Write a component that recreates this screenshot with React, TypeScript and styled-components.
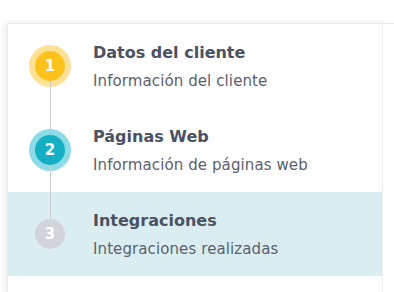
import React from 'react';
import styled, {createGlobalStyle} from 'styled-components';

const GlobalStyle = createGlobalStyle`
    html, body {
        margin: 0;
        padding: 0;
        background: #ffffff;
        font-family: "DejaVu Sans", "Noto Sans", sans-serif;
    }
`;

interface Step {
    number: number;
    title: string;
    subtitle: string;
    color: string;
    ring: string;
    active?: boolean;
}

const STEPS: Step[] = [
    {number: 1, title: 'Datos del cliente', subtitle: 'Información del cliente', color: '#fcc21b', ring: '#ffe195'},
    {number: 2, title: 'Páginas Web', subtitle: 'Información de páginas web', color: '#14afc3', ring: '#8cdbe7'},
    {number: 3, title: 'Integraciones', subtitle: 'Integraciones realizadas', color: '#d2d4db', ring: 'transparent', active: true},
];

export default function App() {
    return (
        <>
            <GlobalStyle />
            <Page>
                <Card>
                    <Sidebar>
                        {STEPS.map((step, i) => (
                            <StepRow key={step.number} $active={step.active}>
                                <Indicator>
                                    <Connector $hidden={i === 0} />
                                    <Bubble $color={step.color} $ring={step.ring}>{step.number}</Bubble>
                                    <Connector $hidden={i === STEPS.length - 1} />
                                </Indicator>
                                <StepText>
                                    <StepTitle>{step.title}</StepTitle>
                                    <StepSubtitle>{step.subtitle}</StepSubtitle>
                                </StepText>
                            </StepRow>
                        ))}
                    </Sidebar>
                    <Content />
                </Card>
            </Page>
        </>
    );
}

const Page = styled.div`
    padding: 23px 0 0 7px;
    height: 269px;
    overflow: hidden;
`

const Card = styled.div`
    display: flex;
    height: 100%;
    border-top: 1px solid #e3eaf0;
    border-left: 1px solid #e8ecf0;
    box-shadow: -4px 0 6px rgba(0, 0, 0, 0.06);
    background: #ffffff;
`

const Sidebar = styled.div`
    width: 374px;
    flex-shrink: 0;
    border-right: 1px solid #eceef1;
`

const Content = styled.div`
    flex: 1;
    background: #ffffff;
`

const StepRow = styled.div<{$active?: boolean}>`
    display: flex;
    align-items: stretch;
    height: 84px;
    padding-left: 27px;
    background: ${p => p.$active ? '#daeef1' : 'transparent'};
`

const Indicator = styled.div`
    width: 30px;
    display: flex;
    flex-direction: column;
    align-items: center;
    flex-shrink: 0;
`

const Connector = styled.div<{$hidden?: boolean}>`
    flex: 1;
    width: 1px;
    background: ${p => p.$hidden ? 'transparent' : '#c9ccd3'};
`

const Bubble = styled.div<{$color: string; $ring: string}>`
    width: 30px;
    height: 30px;
    border-radius: 50%;
    background: ${p => p.$color};
    box-shadow: 0 0 0 6px ${p => p.$ring};
    color: #ffffff;
    font-weight: bold;
    font-size: 15px;
    display: flex;
    align-items: center;
    justify-content: center;
`

const StepText = styled.div`
    display: flex;
    flex-direction: column;
    justify-content: center;
    padding-left: 28px;
    padding-top: 1px;
`

const StepTitle = styled.div`
    font-size: 16px;
    font-weight: bold;
    color: #4a5263;
    line-height: 20px;
`

const StepSubtitle = styled.div`
    margin-top: 9px;
    font-size: 15px;
    letter-spacing: 0.1px;
    color: #5a6170;
    line-height: 18px;
`
